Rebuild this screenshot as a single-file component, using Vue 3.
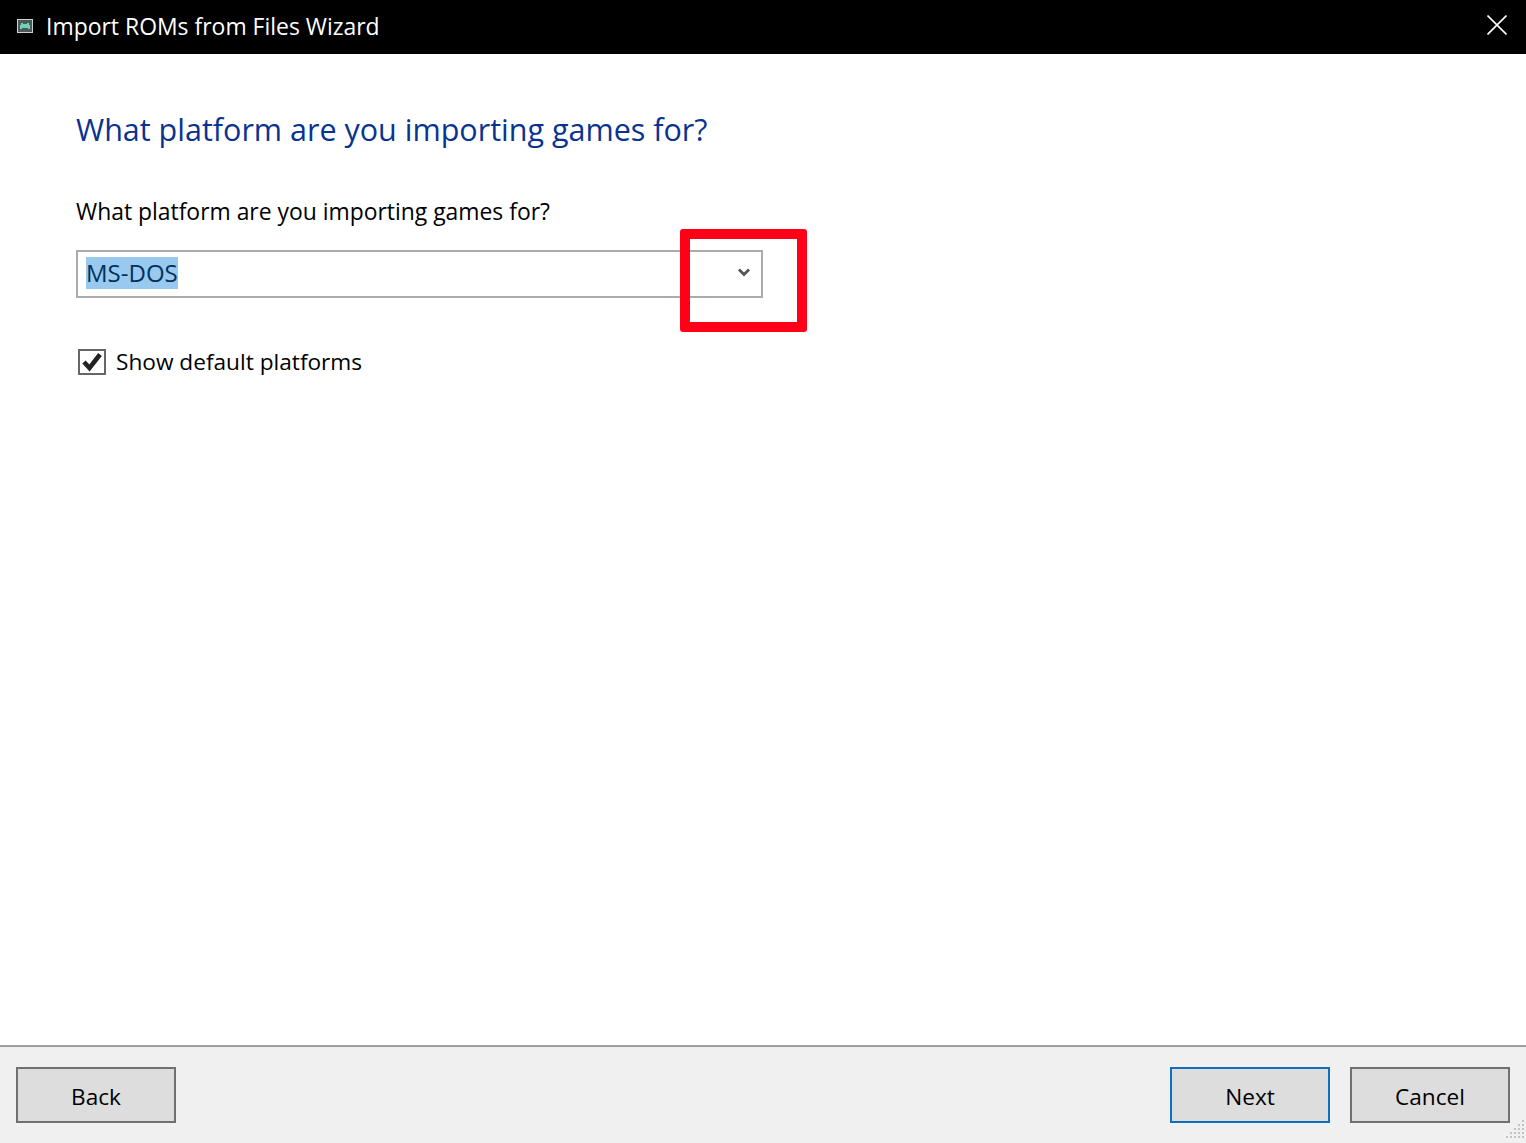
<script setup>
const grip = [[1522,1120],[1518,1124],[1522,1124],[1514,1128],[1518,1128],[1522,1128],[1510,1132],[1514,1132],[1518,1132],[1522,1132],[1506,1136],[1510,1136],[1514,1136],[1518,1136],[1522,1136]]
</script>

<template>
  <div class="window">
    <header class="titlebar">
      <svg class="app-icon" width="16" height="14" viewBox="0 0 16 14" aria-hidden="true">
        <rect x="0.5" y="0.5" width="15" height="13" fill="#4a5a58" stroke="#c9d2d0" />
        <path d="M4 4h2v1h4V4h2v2h1v4h-2V9H5v1H3V6h1z" fill="#6fd0b4" />
      </svg>
      <span class="title">Import ROMs from Files Wizard</span>
      <svg class="close" width="20" height="20" viewBox="0 0 20 20" aria-hidden="true">
        <path d="M0.5 0.5 19.5 19.5M19.5 0.5 0.5 19.5" stroke="#fff" stroke-width="1.6" fill="none" />
      </svg>
    </header>

    <main class="content">
      <h1 class="heading">What platform are you importing games for?</h1>
      <p class="label">What platform are you importing games for?</p>
      <div class="combo">
        <span class="selected">MS-DOS</span>
        <svg class="chevron" width="12" height="9" viewBox="0 0 12 9" aria-hidden="true">
          <path d="M1 1.5 6 6.5l5-5" stroke="#555" stroke-width="2.8" fill="none" />
        </svg>
      </div>
      <div class="check-row">
        <span class="checkbox">
          <svg width="24" height="22" viewBox="0 0 24 22" aria-hidden="true">
            <path d="M4 11 9.5 17 20 3.5" stroke="#222" stroke-width="4.6" fill="none" />
          </svg>
        </span>
        <span class="check-text">Show default platforms</span>
      </div>
    </main>

    <footer class="footer">
      <button class="btn" type="button"><span class="btn-text">Back</span></button>
      <div class="right">
        <button class="btn primary" type="button"><span class="btn-text">Next</span></button>
        <button class="btn" type="button"><span class="btn-text">Cancel</span></button>
      </div>
    </footer>

    <div class="highlight-box"></div>
    <svg class="grip" width="1526" height="1143" aria-hidden="true">
      <rect v-for="(p, i) in grip" :key="i" :x="p[0]" :y="p[1]" width="2" height="2" fill="#c4c4c4" />
    </svg>
  </div>
</template>

<style>
html, body { margin: 0; overflow: hidden; background: #fff; }
</style>

<style scoped>
.window {
  position: relative;
  width: 1526px;
  height: 1143px;
  display: flex;
  flex-direction: column;
  overflow: hidden;
  background: #fff;
  color: #000;
  font-family: "Open Sans", "Noto Sans", sans-serif;
  font-size: 23px;
}
.titlebar {
  flex: none;
  height: 54px;
  display: flex;
  align-items: center;
  padding: 0 19px 0 17px;
  background: #000;
  color: #fff;
}
.app-icon { flex: none; margin-top: -3px; }
.title { margin-left: 13px; flex: 1; font-size: 22.95px; line-height: 1; margin-top: -1px; }
.close { flex: none; margin-top: -4px; }
.content {
  flex: 1;
  padding: 0 0 0 76px;
}
.heading {
  margin: 52px 0 0;
  font-size: 30.5px;
  font-weight: 400;
  line-height: 46px;
  color: #0a3391;
}
.label {
  margin: 43px 0 0;
  font-size: 22.9px;
  line-height: 34px;
}
.combo {
  box-sizing: border-box;
  width: 687px;
  height: 48px;
  margin-top: 21px;
  padding: 0 11px 0 8px;
  display: flex;
  align-items: center;
  justify-content: space-between;
  border: 2px solid #ababab;
  background: #fff;
}
.selected {
  background: #99c9ef;
  color: #00325c;
  font-size: 24px;
  line-height: 32px;
  height: 32px;
  margin-top: -2px;
}
.chevron { margin-top: -4px; }
.check-row {
  margin-top: 49px;
  padding-left: 2px;
  display: flex;
  align-items: center;
  gap: 10px;
  line-height: 28px;
}
.check-text {
  font-size: 22.65px;
  margin-top: 1px;
}
.checkbox {
  box-sizing: border-box;
  width: 28px;
  height: 26px;
  border: 2px solid #666;
  display: flex;
  align-items: center;
  justify-content: center;
  background: #fff;
}
.footer {
  flex: none;
  box-sizing: border-box;
  height: 98px;
  padding: 20px 16px 20px;
  display: flex;
  justify-content: space-between;
  background: #f0f0f0;
  border-top: 2px solid #a0a0a0;
}
.right { display: flex; gap: 20px; }
.btn {
  box-sizing: border-box;
  width: 160px;
  height: 56px;
  padding: 0;
  border: 2px solid #707070;
  border-radius: 0;
  background: #dddddd;
  color: #000;
  font: inherit;
  font-size: 22.6px;
}
.btn-text { display: block; margin-top: 2px; }
.primary { border-color: #0f6fbd; }
.highlight-box {
  position: absolute;
  left: 680px;
  top: 229px;
  width: 127px;
  height: 103px;
  box-sizing: border-box;
  border: 10px solid #ff0019;
  border-radius: 3px;
}
.grip { position: absolute; left: 0; top: 0; pointer-events: none; }
</style>
